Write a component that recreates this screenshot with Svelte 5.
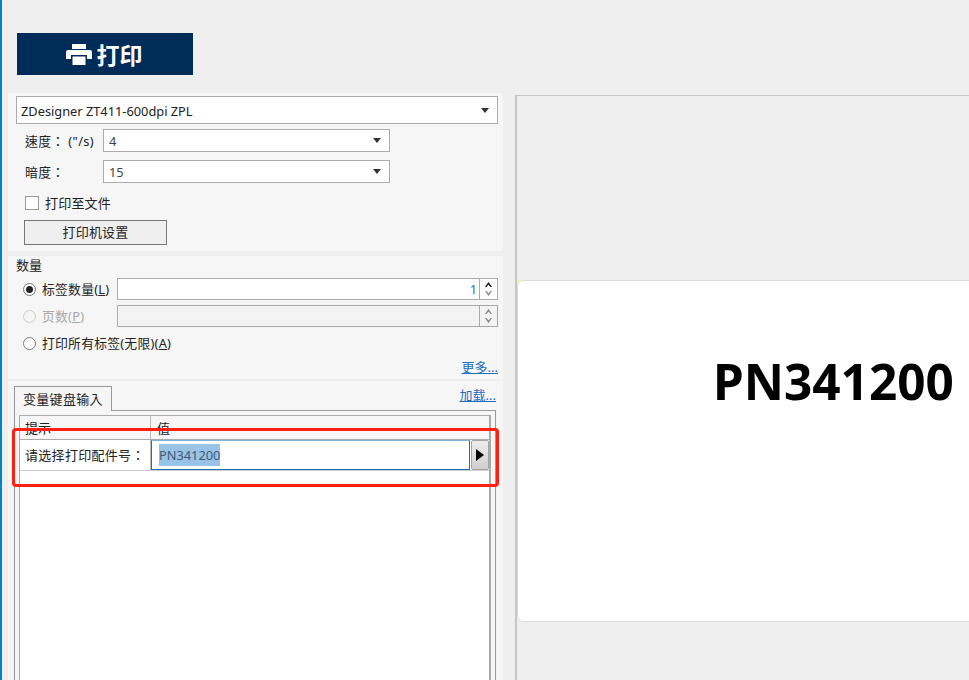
<script lang="ts">
  interface QtyOption {
    label: string;
    key: string;
    checked?: boolean;
    disabled?: boolean;
    spin?: boolean;
    value?: string;
  }

  const options: QtyOption[] = [
    { label: '标签数量', key: 'L', checked: true, spin: true, value: '1' },
    { label: '页数', key: 'P', disabled: true, spin: true, value: '' },
    { label: '打印所有标签(无限)', key: 'A' }
  ];
</script>

<div class="page">
  <aside class="sidebar">
    <div class="toolbar">
      <button class="print-btn">
        <svg class="print-icon" viewBox="0 0 26 21" width="26" height="21" aria-hidden="true">
          <path fill="#fff" d="M6 0h14v5H6zM2 6h22a2 2 0 0 1 2 2v7h-5v-4H5v4H0V8a2 2 0 0 1 2-2zM6.500 12.500h13V21h-13z" />
        </svg>
        <span>打印</span>
      </button>
    </div>

    <section class="panel printer">
      <div class="combo wide">
        <span>ZDesigner ZT411-600dpi ZPL</span>
        <i class="caret"></i>
      </div>
      <div class="field">
        <label class="field-label" for="speed">速度： ("/s)</label>
        <div class="combo short" id="speed"><span>4</span><i class="caret"></i></div>
      </div>
      <div class="field second">
        <label class="field-label" for="dark">暗度：</label>
        <div class="combo short" id="dark"><span>15</span><i class="caret"></i></div>
      </div>
      <div class="check-row">
        <span class="check"></span>
        <span class="check-text">打印至文件</span>
      </div>
      <button class="settings">打印机设置</button>
    </section>

    <section class="panel quantity">
      <div class="qty-title">数量</div>
      {#each options as opt}
        <div class="qty-row" class:disabled={opt.disabled}>
          <span class="radio" class:checked={opt.checked}></span>
          <span class="qty-label">{opt.label}(<u>{opt.key}</u>)</span>
          {#if opt.spin}
            <div class="spin">
              <span class="spin-value">{opt.value}</span>
              <div class="spin-btns">
                <svg viewBox="0 0 7 5" width="7" height="5"><path d="M0 5l3.500-5L7 5H5.500L3.500 2.500 1.500 5z" /></svg>
                <svg viewBox="0 0 7 5" width="7" height="5"><path d="M0 0l3.500 5L7 0H5.500L3.500 2.500 1.500 0z" /></svg>
              </div>
            </div>
          {/if}
        </div>
      {/each}
      <div class="more"><a href="#more">更多...</a></div>
    </section>

    <section class="panel vars">
      <div class="tabs">
        <div class="tab">变量键盘输入</div>
        <a href="#load" class="load">加载...</a>
      </div>
      <div class="tab-body">
        <div class="grid">
          <div class="grid-head">
            <div class="col-a">提示</div>
            <div class="col-b">值</div>
          </div>
          <div class="grid-row">
            <div class="col-a prompt">请选择打印配件号：</div>
            <div class="value-input"><span class="selected">PN341200</span></div>
            <button class="arrow-btn" aria-label="more">
              <svg viewBox="0 0 8 12" width="8" height="12"><path d="M0 0l8 6-8 6z" /></svg>
            </button>
          </div>
          <div class="grid-empty"></div>
        </div>
      </div>
    </section>
  </aside>

  <main class="preview">
    <div class="label">
      <span class="label-text">PN341200</span>
    </div>
  </main>

  <div class="annotation"></div>
</div>

<style>
  :global(body) {
    margin: 0;
    background: #efefef;
  }

  .page {
    position: relative;
    display: flex;
    width: 969px;
    height: 680px;
    overflow: hidden;
    box-sizing: border-box;
    border-left: 2px solid #0085c3;
    background: #efefef;
    color: #222;
    font-family: "Noto Sans", "Noto Sans CJK TC", sans-serif;
    font-size: 12.800px;
  }

  .sidebar {
    width: 513px;
    flex: none;
    padding-left: 6px;
    box-sizing: border-box;
  }

  .toolbar {
    height: 93px;
    padding: 33px 0 0 9px;
    box-sizing: border-box;
  }

  .print-btn {
    display: flex;
    align-items: center;
    justify-content: center;
    gap: 5px;
    width: 176px;
    height: 42px;
    padding: 0 2px 0 0;
    border: none;
    background: #002c5a;
    color: #fff;
    font-family: "Noto Sans CJK SC", sans-serif;
    font-size: 23px;
    font-weight: 700;
  }

  .panel {
    width: 495px;
    box-sizing: border-box;
    background: #f6f6f6;
  }

  .printer {
    height: 158px;
    padding: 3px 5px 0 8px;
  }

  .combo {
    display: flex;
    align-items: center;
    justify-content: space-between;
    box-sizing: border-box;
    border: 1px solid #ababab;
    background: #fff;
    padding: 1px 8px 0 4px;
  }

  .combo.wide {
    height: 28px;
  }

  .combo.short {
    width: 287px;
    height: 23px;
    padding-left: 5px;
    color: #444;
  }

  .caret {
    width: 0;
    height: 0;
    margin-top: -1px;
    border-left: 4px solid transparent;
    border-right: 4px solid transparent;
    border-top: 5px solid #333;
  }

  .field {
    display: flex;
    align-items: center;
    margin-top: 5px;
  }

  .field.second {
    margin-top: 8px;
  }

  .field-label {
    width: 87px;
    padding-left: 9px;
    box-sizing: border-box;
    white-space: nowrap;
    letter-spacing: 0.4px;
  }

  .check-row {
    display: flex;
    align-items: center;
    gap: 6px;
    height: 14px;
    margin: 13px 0 0 9px;
    font-size: 13px;
  }

  .check-text {
    margin-top: -2px;
    letter-spacing: 0.2px;
  }

  .check {
    width: 14px;
    height: 14px;
    box-sizing: border-box;
    border: 1px solid #999;
    background: #fff;
  }

  .settings {
    display: block;
    width: 143px;
    height: 25px;
    margin: 10px 0 0 8px;
    padding: 0 0 2px;
    border: 1px solid #777;
    background: #efefef;
    color: #222;
    font-family: inherit;
    font-size: 13px;
    letter-spacing: 0.2px;
  }

  .quantity {
    height: 123px;
    margin-top: 5px;
    padding: 1px 5px 0 8px;
  }

  .qty-title {
    height: 21px;
    line-height: 16px;
    font-size: 13px;
  }

  .qty-row {
    display: flex;
    align-items: center;
    height: 22px;
    margin-bottom: 5px;
    font-size: 12.800px;
  }

  .qty-row.disabled {
    color: #a8a8a8;
  }

  .radio {
    flex: none;
    position: relative;
    width: 13px;
    height: 13px;
    margin: 0 6px 0 7px;
    border: 1px solid #777;
    border-radius: 50%;
    background: #fff;
    box-sizing: border-box;
  }

  .disabled .radio {
    border-color: #ccc;
    background: #f6f6f6;
  }

  .radio.checked::after {
    content: "";
    position: absolute;
    inset: 2px;
    border-radius: 50%;
    background: #222;
  }

  .qty-label {
    margin-top: -1px;
    white-space: nowrap;
    letter-spacing: 0.25px;
  }

  .spin {
    display: flex;
    width: 381px;
    height: 22px;
    margin-left: auto;
    box-sizing: border-box;
    border: 1px solid #ababab;
    background: #fff;
  }

  .disabled .spin {
    background: #f3f3f3;
  }

  .spin-value {
    flex: 1;
    text-align: right;
    padding-right: 2px;
    line-height: 20px;
    color: #1f6fc0;
  }

  .spin-btns {
    display: flex;
    flex-direction: column;
    align-items: center;
    justify-content: center;
    gap: 4px;
    width: 17px;
    border-left: 1px solid #ababab;
  }

  .spin-btns svg {
    fill: #888;
  }

  .spin-btns svg:first-child {
    fill: #111;
  }

  .disabled .spin-btns svg:first-child {
    fill: #888;
  }

  .more {
    text-align: right;
    line-height: 17px;
    margin-top: 3px;
  }

  a {
    color: #1a6fc4;
    font-size: 13px;
    text-decoration: underline;
  }

  .vars {
    height: 299px;
    margin-top: 2px;
    padding: 5px 0 0 6px;
  }

  .tabs {
    display: flex;
    align-items: flex-start;
    justify-content: space-between;
    width: 482px;
    height: 24px;
  }

  .tab {
    position: relative;
    z-index: 1;
    width: 98px;
    height: 25px;
    box-sizing: border-box;
    border: 1px solid #999;
    border-bottom: none;
    background: #f6f6f6;
    padding-left: 8px;
    line-height: 24px;
    font-size: 13px;
    letter-spacing: 0.3px;
  }

  .load {
    line-height: 18px;
  }

  .tab-body {
    width: 482px;
    height: 300px;
    box-sizing: border-box;
    border: 1px solid #999;
    padding: 4px 4px 0;
  }

  .grid {
    height: 280px;
    border: 1px solid #aaa;
    border-right-width: 2px;
    background: #fff;
    font-size: 13px;
  }

  .grid-head {
    display: flex;
    height: 23px;
    box-sizing: content-box;
    background: #f6f6f6;
    border-bottom: 1px solid #aaa;
    line-height: 24px;
  }

  .col-a {
    width: 131px;
    flex: none;
    box-sizing: border-box;
    padding-left: 5px;
    border-right: 1px solid #bbb;
    white-space: nowrap;
  }

  .col-a.prompt {
    letter-spacing: 0.3px;
  }

  .col-b {
    padding-left: 6px;
  }

  .grid-row {
    display: flex;
    height: 30px;
    border-bottom: 1px solid #ccc;
    background: #fff;
    line-height: 30px;
  }

  .value-input {
    flex: 1;
    box-sizing: border-box;
    border: 1px solid #1a6fb5;
    border-top-color: #7db2dc;
    padding-left: 7px;
    line-height: 29px;
    font-size: 12.800px;
    background: #fff;
  }

  .selected {
    background: #99c3e6;
    color: #3c5a78;
    padding: 2px 0;
  }

  .arrow-btn {
    display: flex;
    align-items: center;
    justify-content: center;
    width: 18px;
    height: 30px;
    margin-left: 1px;
    padding: 0;
    box-sizing: border-box;
    border: 1px solid #a5a5a5;
    border-radius: 2px;
    background: linear-gradient(#eeeeee, #cfcfcf);
  }

  .preview {
    flex: 1;
    margin-top: 95px;
    padding-top: 184px;
    box-sizing: border-box;
    border-top: 1px solid #c6c6c6;
    border-left: 2px solid #c6c6c6;
    background: #efefef;
  }

  .label {
    position: relative;
    display: flex;
    align-items: center;
    height: 342px;
    margin-right: -20px;
    padding: 0 0 0 195px;
    box-sizing: border-box;
    border: 1px solid #dcdcdc;
    border-radius: 6px;
    background: #fff;
  }

  .label::before {
    content: "";
    position: absolute;
    left: -1px;
    top: -1px;
    width: 5px;
    height: 5px;
    background: linear-gradient(135deg, #f3f3b8 50%, transparent 50%);
  }

  .label-text {
    margin-top: -140px;
    color: #000;
    font-family: "Noto Sans", sans-serif;
    font-size: 49.500px;
    font-weight: 700;
    white-space: nowrap;
  }

  .annotation {
    position: absolute;
    left: 10px;
    top: 428px;
    width: 487px;
    height: 59px;
    box-sizing: border-box;
    border: 3px solid #ff2012;
    border-radius: 4px;
    pointer-events: none;
  }
</style>
